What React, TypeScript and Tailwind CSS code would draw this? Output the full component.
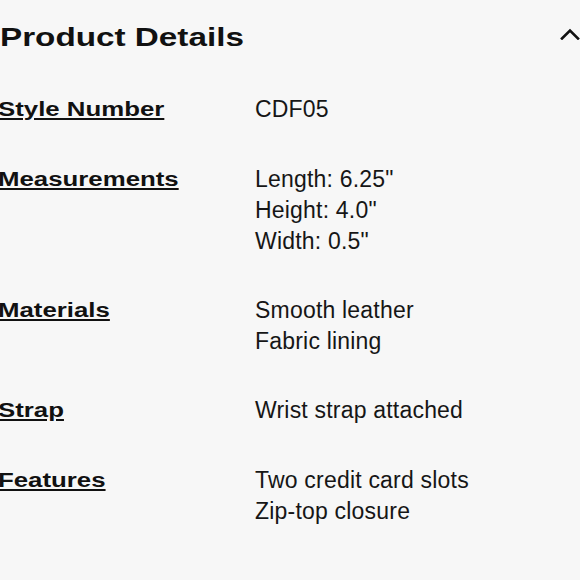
import React from "react";

const rows: { label: string; values: string[] }[] = [
  { label: "Style Number", values: ["CDF05"] },
  { label: "Measurements", values: ['Length: 6.25"', 'Height: 4.0"', 'Width: 0.5"'] },
  { label: "Materials", values: ["Smooth leather", "Fabric lining"] },
  { label: "Strap", values: ["Wrist strap attached"] },
  { label: "Features", values: ["Two credit card slots", "Zip-top closure"] },
];

export default function App() {
  return (
    <div
      className="w-[580px] h-[580px] overflow-hidden bg-[#f7f7f7] text-[#111111]"
      style={{ fontFamily: '"Liberation Sans", Arial, Helvetica, sans-serif' }}
    >
      <div className="pt-[19px]">
        <div className="flex items-start justify-between">
          <h2 className="h-[36px] text-[25px] leading-[36px] font-bold inline-block origin-left scale-x-[1.33] whitespace-nowrap">
            Product Details
          </h2>
          <svg
            width="20"
            height="12"
            viewBox="0 0 20 12"
            className="mt-[9px]"
            fill="none"
            stroke="#111111"
            strokeWidth="2.6"
            strokeLinecap="square"
            strokeLinejoin="miter"
          >
            <polyline points="2,10.5 10,2.5 18,10.5" />
          </svg>
        </div>
        <div className="mt-[38.5px] grid grid-cols-[255px_1fr] gap-y-[38px]">
          {rows.map((r) => (
            <React.Fragment key={r.label}>
              <div className="leading-[31px] -ml-[2px]">
                <span className="inline-block origin-left scale-x-[1.29] whitespace-nowrap text-[20px] font-bold underline decoration-[2px] underline-offset-[2px]">
                  {r.label}
                </span>
              </div>
              <div className="flex flex-col text-[23px] leading-[31px] tracking-[0.2px] text-[#161616]">
                {r.values.map((v) => (
                  <span key={v} className="whitespace-nowrap">
                    {v}
                  </span>
                ))}
              </div>
            </React.Fragment>
          ))}
        </div>
      </div>
    </div>
  );
}
